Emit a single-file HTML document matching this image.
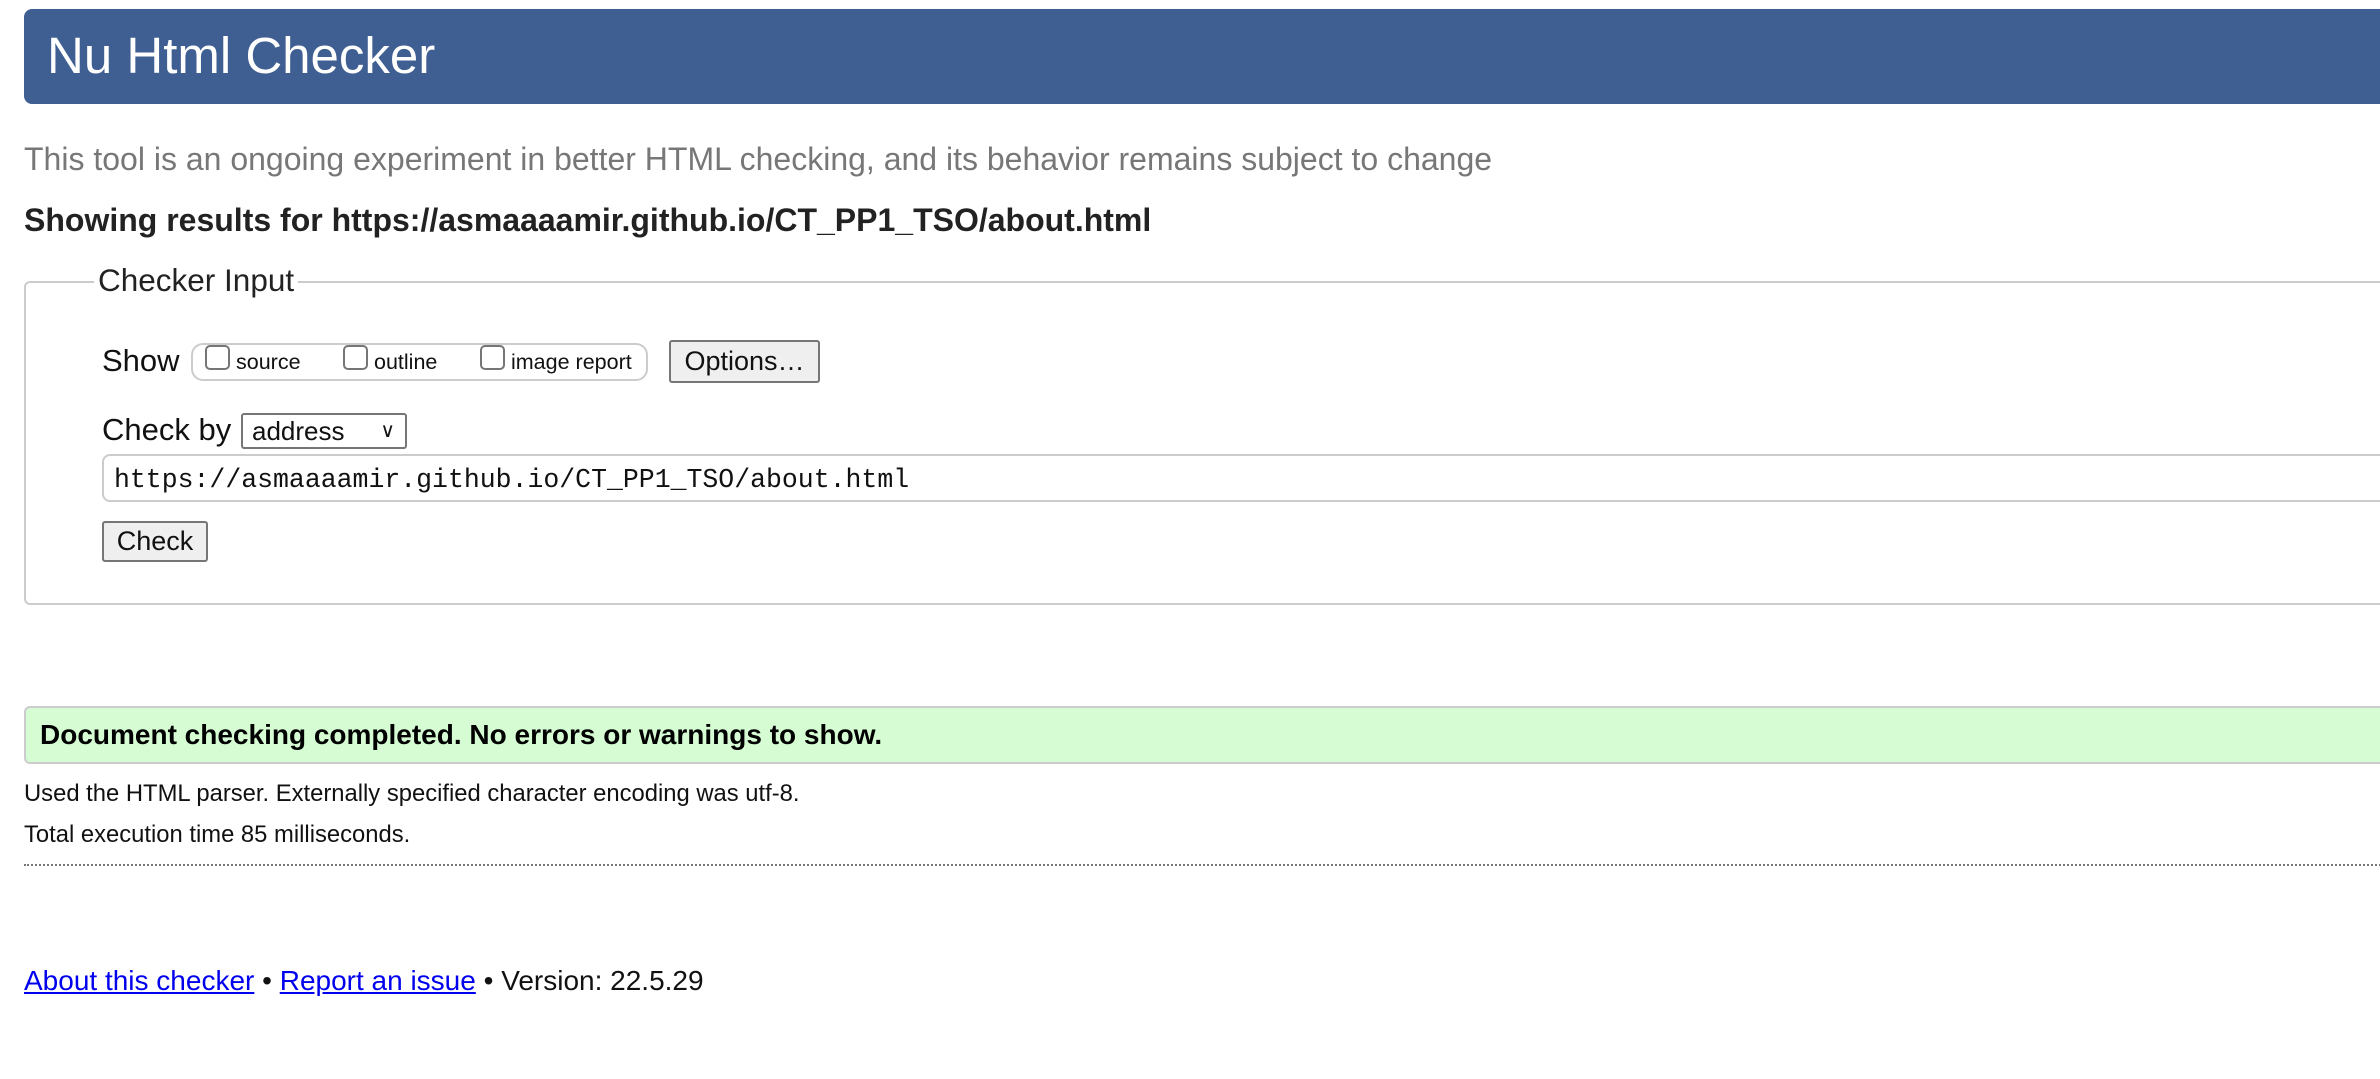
<!DOCTYPE html>
<html><head><meta charset="utf-8"><style>
*{box-sizing:border-box}
body{margin:0;width:2380px;height:1079px;overflow:hidden;background:#fff;font-family:"Liberation Sans",Arial,sans-serif;color:#111;position:relative}
.a{position:absolute;white-space:nowrap}
.hdr{left:24px;top:9px;width:2400px;height:95px;background:#3f5e91;border-radius:8px 0 0 8px}
.cb{position:absolute;width:25px;height:25px;border:2px solid #767676;border-radius:5px;background:#fff}
.btn{position:absolute;background:#efefef;border:2px solid #767676;border-radius:3px;font-size:27px;text-align:center}
</style></head><body>
<div class="a hdr"></div>
<div class="a" style="left:47px;top:28px;font-size:51px;color:#fff;line-height:56px">Nu Html Checker</div>
<div class="a" style="left:24px;top:141px;font-size:32px;color:#777;line-height:36px">This tool is an ongoing experiment in better HTML checking, and its behavior remains subject to change</div>
<div class="a" style="left:24px;top:202px;font-size:32px;font-weight:bold;color:#222;line-height:36px">Showing results for https://asmaaaamir.github.io/CT_PP1_TSO/about.html</div>
<div class="a" style="left:24px;top:281px;width:2400px;height:324px;border:2px solid #ccc;border-radius:6px 0 0 6px"></div>
<div class="a" style="left:94px;top:262px;font-size:31.5px;background:#fff;padding:0 4px;line-height:36px;color:#222">Checker Input</div>
<div class="a" style="left:102px;top:343px;font-size:31px;line-height:36px">Show</div>
<div class="a" style="left:191px;top:343px;width:457px;height:38px;border:2px solid #ccc;border-radius:12px"></div>
<div class="cb" style="left:205px;top:345px"></div>
<div class="a" style="left:236px;top:350px;font-size:21.5px">source</div>
<div class="cb" style="left:343px;top:345px"></div>
<div class="a" style="left:374px;top:350px;font-size:21.5px">outline</div>
<div class="cb" style="left:480px;top:345px"></div>
<div class="a" style="left:511px;top:350px;font-size:21.5px">image report</div>
<div class="btn" style="left:669px;top:340px;width:151px;height:43px;line-height:38px">Options…</div>
<div class="a" style="left:102px;top:412px;font-size:31px;line-height:36px">Check by</div>
<div class="a" style="left:241px;top:413px;width:166px;height:36px;border:2px solid #767676;border-radius:3px;font-size:26px;line-height:32px;padding-left:9px">address<span style="position:absolute;right:10px;top:0;font-size:20px">&#8744;</span></div>
<div class="a" style="left:102px;top:454px;width:2400px;height:48px;border:2px solid #ccc;border-radius:8px 0 0 8px"></div>
<div class="a" style="left:114px;top:465px;font-family:'Liberation Mono',monospace;font-size:26.5px;line-height:30px">https://asmaaaamir.github.io/CT_PP1_TSO/about.html</div>
<div class="btn" style="left:102px;top:521px;width:106px;height:41px;line-height:37px">Check</div>
<div class="a" style="left:24px;top:706px;width:2400px;height:58px;background:#d6fcd3;border:2px solid #ccc;border-radius:6px 0 0 6px"></div>
<div class="a" style="left:40px;top:719px;font-size:28px;font-weight:bold;line-height:32px;color:#000">Document checking completed. No errors or warnings to show.</div>
<div class="a" style="left:24px;top:780px;font-size:23.8px;line-height:28px">Used the HTML parser. Externally specified character encoding was utf-8.</div>
<div class="a" style="left:24px;top:821px;font-size:23.8px;line-height:28px">Total execution time 85 milliseconds.</div>
<div class="a" style="left:24px;top:864px;width:2400px;border-top:2px dotted #777"></div>
<div class="a" style="left:24px;top:965px;font-size:28px;line-height:32px"><span style="color:#00e;text-decoration:underline">About this checker</span> • <span style="color:#00e;text-decoration:underline">Report an issue</span> • Version: 22.5.29</div>
</body></html>
